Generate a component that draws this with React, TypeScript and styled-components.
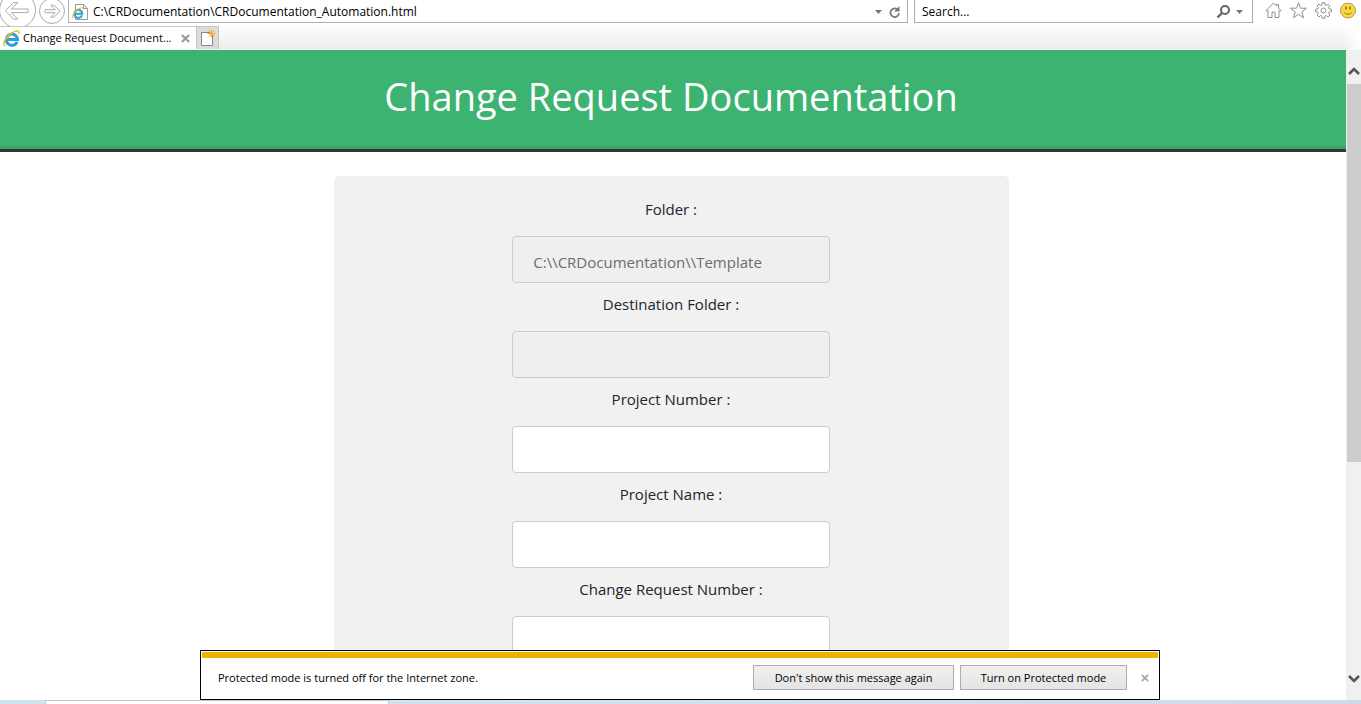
import React from "react";
import styled, { createGlobalStyle } from "styled-components";

const Global = createGlobalStyle`
  * { box-sizing: border-box; }
  body { margin: 0; background: #fff; color: #212529; font-family: "Open Sans", "Noto Sans", sans-serif; }
  button, input { font-family: inherit; }
  svg { flex: none; }
`;

const Window = styled.div`
  display: flex;
  flex-direction: column;
  height: 100vh;
  overflow: hidden;
`;

const Toolbar = styled.header`
  display: flex;
  align-items: flex-start;
  height: 26px;
  flex: none;
  overflow: hidden;
  background: #fff;
`;

const NavButton = styled.button<{ $width: number }>`
  display: flex;
  align-items: flex-start;
  width: ${(p) => p.$width}px;
  flex: none;
  padding: 0;
  border: 0;
  background: none;
`;

const Field = styled.div<{ $grow?: boolean }>`
  display: flex;
  align-items: center;
  flex: ${(p) => (p.$grow ? "1 1 0" : "0 0 339px")};
  min-width: 0;
  height: 23px;
  border: 1px solid #adadad;
  border-top: 0;
  padding: ${(p) => (p.$grow ? "1px 5px 0 3px" : "1px 9px 0 3px")};
`;

const FieldInput = styled.input`
  flex: 1;
  min-width: 0;
  border: 0;
  padding: 0 0 0 4px;
  background: none;
  font-size: 12px;
  line-height: 18px;
  color: #000;
  outline: 0;
  &::placeholder { color: #000; opacity: 1; }
`;

const IconButton = styled.button`
  display: flex;
  align-items: center;
  justify-content: center;
  padding: 0;
  border: 0;
  background: none;
  flex: none;
`;

const Tools = styled.div`
  display: flex;
  gap: 8px;
  padding: 2px 4px 0 12px;
`;

const TabStrip = styled.nav`
  display: flex;
  align-items: stretch;
  height: 24px;
  flex: none;
  border-bottom: 1px solid #f7f7f7;
  background: linear-gradient(90deg, transparent calc(100% - 20px), #fff 100%),
    linear-gradient(#fdfdfd, #ececec);
`;

const Tab = styled.div`
  display: flex;
  align-items: center;
  gap: 3px;
  width: 196px;
  padding: 0 6px 0 3px;
  border-top: 1px solid #c6c6c6;
  background: #fff;
`;

const TabLink = styled.a`
  flex: 1;
  color: #000;
  font-size: 11px;
  line-height: 18px;
  white-space: nowrap;
  text-decoration: none;
`;

const NewTab = styled.button`
  display: flex;
  width: 23px;
  padding: 1px 0 0 3px;
  border: 1px solid #c6c6c6;
  border-bottom: 0;
  background: #dcdcdc;
`;

const Viewport = styled.div`
  position: relative;
  display: flex;
  flex: 1;
  min-height: 0;
`;

const Page = styled.main`
  flex: 1;
  overflow: hidden;
`;

const Banner = styled.div`
  padding: 16px 20px 16px 16px;
  height: 102px;
  background: #3cb371;
  border-bottom: 3px solid #2f3331;
  box-shadow: inset 0 -3px 0 #38a468;
  text-align: center;
`;

const Title = styled.h1`
  margin: 0;
  color: #fff;
  font-size: 38px;
  font-weight: 400;
  line-height: 60px;
`;

const Content = styled.div`
  padding: 24px 4px 0 0;
`;

const Form = styled.form`
  display: flex;
  flex-direction: column;
  align-items: center;
  width: calc(50% + 4px);
  min-height: 600px;
  margin: 0 auto;
  padding: 20px;
  border-radius: 5px;
  background: #f1f1f1;
`;

const Label = styled.label`
  font-size: 15px;
  line-height: 26px;
  white-space: nowrap;
`;

const TextBox = styled.input`
  width: 50%;
  height: 47px;
  margin: 14px 0 8px;
  padding: 4px 20px 0;
  border: 1px solid #ccc;
  border-radius: 4px;
  background: #fff;
  color: #6d6d6d;
  font-size: 15px;
  &:disabled { background: #efefef; }
`;

const ScrollBar = styled.div`
  display: flex;
  flex-direction: column;
  width: 15px;
  flex: none;
  background: #f0f0f0;
`;

const ScrollTrack = styled.div`
  flex: 1;
  padding-left: 1px;
`;

const ScrollThumb = styled.div`
  height: 66%;
  background: #cdcdcd;
`;

const ScrollArrow = styled(IconButton)<{ $height: number; $up?: boolean }>`
  height: ${(p) => p.$height}px;
  padding: ${(p) => (p.$up ? "8px 0 0 1px" : "0 0 0 1px")};
`;

const Notice = styled.aside`
  position: absolute;
  right: 1px;
  bottom: 0;
  left: 0;
  display: flex;
  align-items: center;
  width: 960px;
  max-width: 100%;
  height: 50px;
  margin: 0 auto;
  padding: 5px 3px 0 17px;
  border: 1px solid #000;
  background: linear-gradient(#f2b000, #f2b000) 1px 1px / calc(100% - 2px) 6px no-repeat #fff;
  color: #000;
  font-size: 11px;
`;

const NoticeText = styled.p`
  flex: 1;
  margin: 0;
`;

const NoticeButton = styled.button<{ $width: number }>`
  width: ${(p) => p.$width}px;
  height: 25px;
  margin-right: 6px;
  padding: 0;
  border: 1px solid #acacac;
  background: linear-gradient(#f0f0f0, #e4e4e4);
  color: #000;
  font-size: 11px;
`;

const NoticeClose = styled(IconButton)`
  width: 23px;
  height: 25px;
`;

const TaskEdge = styled.footer`
  display: flex;
  height: 4px;
  flex: none;
  padding-left: 45px;
  background: linear-gradient(90deg, #cfe6ee 0, #d3dfee 60%, #d0d9ea 100%);
`;

const TaskWindow = styled.div`
  width: 344px;
  border: 1px solid #c5c5c5;
  border-bottom: 0;
  background: #fff;
`;

const IeLogo = ({ size = 17 }: { size?: number }) => (
  <svg width={size} height={size} viewBox="0 0 16 16" aria-hidden="true">
    <path d="M13.300 11.200A5.300 5.300 0 1 1 13.700 8.900H4.500" fill="none" stroke="#2b9fdc" strokeWidth="2.700" />
    <path d="M2.200 14.900C-1.300 13.500 2.500 6.800 7.500 3.300 11.500.6 15.800-.2 14.900 3.600" fill="none" stroke="#f3bd25" strokeWidth="1.500" />
  </svg>
);

const Cross = ({ size = 8, color = "#999" }: { size?: number; color?: string }) => (
  <svg width={size} height={size} viewBox="0 0 8 8" aria-hidden="true">
    <path d="M.8.8 7.2 7.2M7.2.8.8 7.2" stroke={color} strokeWidth="1.900" />
  </svg>
);

const Caret = () => (
  <svg width="7" height="4" viewBox="0 0 7 4" aria-hidden="true"><path d="M0 0h7L3.5 4z" fill="#777" /></svg>
);

const Chevron = ({ up }: { up?: boolean }) => (
  <svg width="12" height="10" viewBox="0 0 12 10" aria-hidden="true">
    <path d={up ? "M1 8 6 3l5 5" : "M1 2l5 5 5-5"} fill="none" stroke="#555" strokeWidth="2.600" />
  </svg>
);

const fields = [
  { id: "folder", label: "Folder :", value: "C:\\\\CRDocumentation\\\\Template", disabled: true },
  { id: "destination", label: "Destination Folder :", disabled: true },
  { id: "project-number", label: "Project Number :" },
  { id: "project-name", label: "Project Name :" },
  { id: "request-number", label: "Change Request Number :" },
];

export default function App() {
  return (
    <Window>
      <Global />
      <Toolbar>
        <NavButton $width={38} aria-label="Back">
          <svg width="38" height="28" viewBox="0 0 38 28">
            <circle cx="17.500" cy="10" r="18" fill="#fff" stroke="#aaa" />
            <path d="M5.500 10.800 13.500 2.500h4.300l-6.500 6.500H28v3.600H11.300l6.500 6.500h-4.300z" fill="#fff" stroke="#aaa" />
          </svg>
        </NavButton>
        <NavButton $width={30} aria-label="Forward">
          <svg width="30" height="27" viewBox="0 0 30 27">
            <circle cx="14" cy="11" r="12.500" fill="#fff" stroke="#aaa" />
            <path d="M22 11.200 16 5.200h-3.300l4.500 4.500H7v3h10.200l-4.500 4.500H16z" fill="#fff" stroke="#aaa" />
          </svg>
        </NavButton>
        <Field $grow>
          <svg width="17" height="18" viewBox="0 0 17 18" aria-hidden="true">
            <path d="M3.500 1.500h8l4 4v11h-12z" fill="#fff" stroke="#999" />
            <path d="M11.500 1.500v4h4" fill="none" stroke="#999" />
            <svg x="0" y="4" width="12" height="12"><IeLogo size={12} /></svg>
          </svg>
          <FieldInput aria-label="Address" defaultValue="C:\CRDocumentation\CRDocumentation_Automation.html" />
          <IconButton aria-label="Show addresses"><Caret /></IconButton>
          <IconButton aria-label="Refresh">
            <svg width="20" height="16" viewBox="-3 0 20 16">
              <path d="M12.200 5.200A4.300 4.300 0 1 0 14 9.200" fill="none" stroke="#777" strokeWidth="1.800" />
              <path d="M14.500 2v5.500H9z" fill="#777" />
            </svg>
          </IconButton>
        </Field>
        <svg width="6" height="23" aria-hidden="true" />
        <Field>
          <FieldInput aria-label="Search" placeholder="Search..." />
          <IconButton aria-label="Search web">
            <svg width="20" height="16" viewBox="0 0 20 16">
              <circle cx="9" cy="6" r="4" fill="none" stroke="#666" strokeWidth="2" />
              <path d="M6 9 1.500 13.500" stroke="#666" strokeWidth="2.400" />
            </svg>
          </IconButton>
          <IconButton aria-label="Search options"><Caret /></IconButton>
        </Field>
        <Tools>
          <IconButton aria-label="Home">
            <svg width="17" height="17" viewBox="0 0 17 17" fill="none" stroke="#909090">
              <path d="M8.500 1 1 8.500l1 1 1-1V15.500h4V10h3v5.500h4V8.500l1 1 1-1L13.500 6V2.500h-2V4z" />
            </svg>
          </IconButton>
          <IconButton aria-label="Favorites">
            <svg width="17" height="17" viewBox="0 0 17 17" fill="none" stroke="#909090">
              <path d="m8.500.8 2 5.400h6l-4.700 3.700 1.800 5.900-5.100-3.500-5.100 3.500 1.800-5.900L.5 6.200h6z" />
            </svg>
          </IconButton>
          <IconButton aria-label="Tools">
            <svg width="17" height="17" viewBox="0 0 17 17" fill="none" stroke="#909090">
              <path d="M7 .8h3v2l1.500.7L13 2l2 2-1.500 1.500.7 1.500h2v3h-2l-.7 1.500L15 13l-2 2-1.500-1.500-1.500.7v2H7v-2l-1.500-.7L4 15l-2-2 1.500-1.500L2.800 10h-2V7h2l.7-1.500L2 4l2-2 1.500 1.500L7 2.800z" />
              <circle cx="8.500" cy="8.500" r="2.500" />
            </svg>
          </IconButton>
          <IconButton aria-label="Send a smile">
            <svg width="17" height="17" viewBox="0 0 17 17">
              <circle cx="8" cy="8.500" r="7.500" fill="#fcd93f" stroke="#a99a59" />
              <path d="M6 4.500v3M10 4.500v3" fill="none" stroke="#7b6524" strokeWidth="1.400" />
              <path d="M4 10.300c1.500 2.500 6.500 2.500 8 0" fill="none" stroke="#8d7528" />
            </svg>
          </IconButton>
        </Tools>
      </Toolbar>
      <TabStrip>
        <Tab>
          <IeLogo />
          <TabLink href="#">Change Request Document...</TabLink>
          <IconButton aria-label="Close tab"><Cross size={9} /></IconButton>
        </Tab>
        <NewTab aria-label="New tab">
          <svg width="18" height="20" viewBox="0 0 18 20">
            <path d="M1.500 4.500h11v13h-11z" fill="#fff" stroke="#888" />
            <path d="M11.500 1.500v8M7.500 5.500h8M8.700 2.700l5.600 5.600M14.300 2.700 8.700 8.300" stroke="#f2a72e" />
            <circle cx="11.500" cy="5.500" r="2" fill="#f9b233" />
          </svg>
        </NewTab>
      </TabStrip>
      <Viewport>
        <Page>
          <Banner><Title>Change Request Documentation</Title></Banner>
          <Content>
            <Form>
              {fields.map((f) => (
                <React.Fragment key={f.id}>
                  <Label htmlFor={f.id}>{f.label}</Label>
                  <TextBox id={f.id} defaultValue={f.value} disabled={f.disabled} />
                </React.Fragment>
              ))}
            </Form>
          </Content>
        </Page>
        <ScrollBar>
          <ScrollArrow $height={34} $up aria-label="Scroll up"><Chevron up /></ScrollArrow>
          <ScrollTrack><ScrollThumb /></ScrollTrack>
          <ScrollArrow $height={43} aria-label="Scroll down"><Chevron /></ScrollArrow>
        </ScrollBar>
        <Notice>
          <NoticeText>Protected mode is turned off for the Internet zone.</NoticeText>
          <NoticeButton $width={201}>Don't show this message again</NoticeButton>
          <NoticeButton $width={167}>Turn on Protected mode</NoticeButton>
          <NoticeClose aria-label="Close"><Cross color="#aaa" /></NoticeClose>
        </Notice>
      </Viewport>
      <TaskEdge><TaskWindow /></TaskEdge>
    </Window>
  );
}
